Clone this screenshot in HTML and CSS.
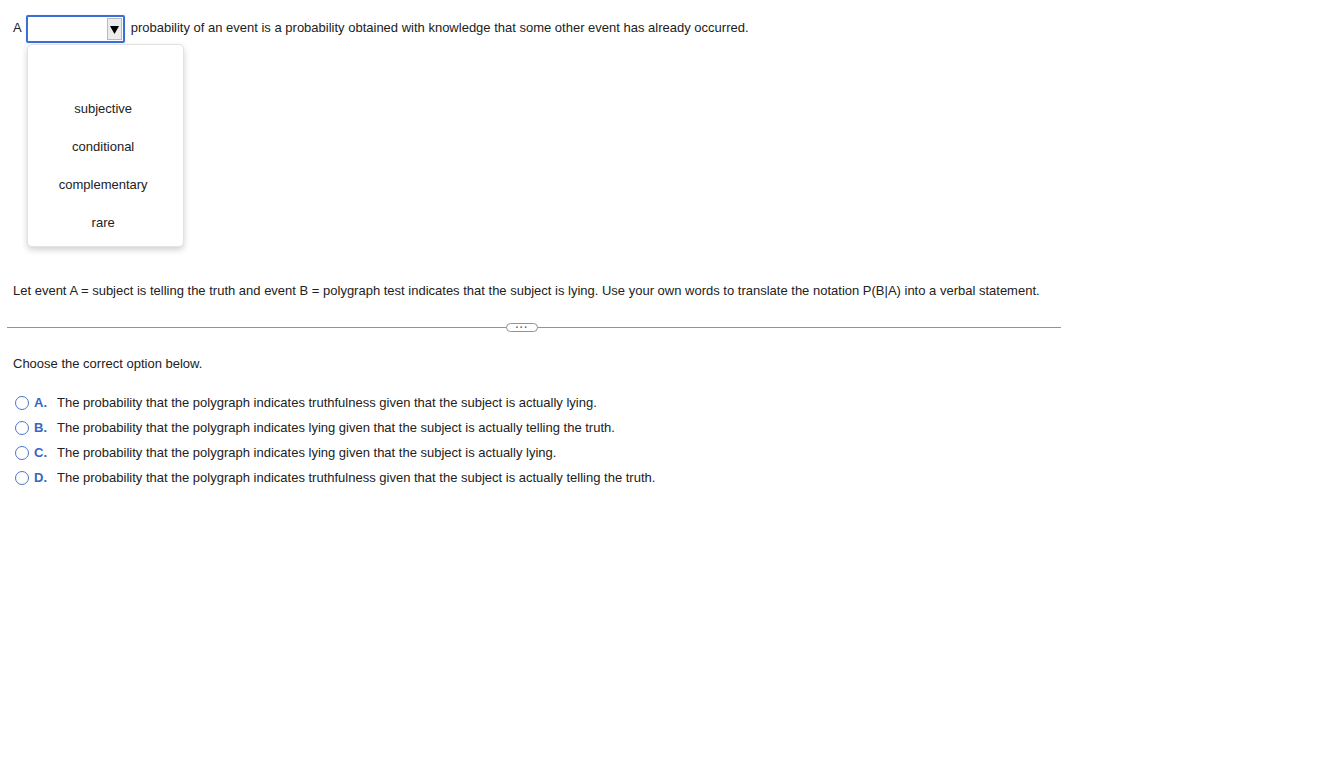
FILE: index.html
```html
<!DOCTYPE html>
<html>
<head>
<meta charset="utf-8">
<link rel="stylesheet" href="styles.css">
</head>
<body>
<div class="page">
  <div class="q1">
    <span class="lead">A</span>
    <span class="select-wrap">
      <span class="select"><span class="arrow"><svg width="9" height="9" viewBox="0 0 9 9"><path d="M0 1 H9 L4.5 9 Z" fill="#000"/></svg></span></span>
      <div class="menu">
        <div class="opt">subjective</div>
        <div class="opt">conditional</div>
        <div class="opt">complementary</div>
        <div class="opt">rare</div>
      </div>
    </span>
    <span class="rest">probability of an event is a probability obtained with knowledge that some other event has already occurred.</span>
  </div>

  <p class="q2">Let event A = subject is telling the truth and event B = polygraph test indicates that the subject is lying. Use your own words to translate the notation P(B|A) into a verbal statement.</p>

  <div class="divider"><span class="more">&middot;&middot;&middot;</span></div>

  <p class="choose">Choose the correct option below.</p>

  <ul class="choices">
    <li><span class="radio"></span><span class="letter">A.</span><span>The probability that the polygraph indicates truthfulness given that the subject is actually lying.</span></li>
    <li><span class="radio"></span><span class="letter">B.</span><span>The probability that the polygraph indicates lying given that the subject is actually telling the truth.</span></li>
    <li><span class="radio"></span><span class="letter">C.</span><span>The probability that the polygraph indicates lying given that the subject is actually lying.</span></li>
    <li><span class="radio"></span><span class="letter">D.</span><span>The probability that the polygraph indicates truthfulness given that the subject is actually telling the truth.</span></li>
  </ul>
</div>
</body>
</html>
```

FILE: styles.css
```css
html, body {
  margin: 0;
  padding: 0;
  background: #fff;
}
body {
  font-family: "Liberation Sans", Arial, sans-serif;
  font-size: 13px;
  color: #222;
}
.page {
  width: 1062px;
  padding: 15px 0 0 0;
}
.q1 {
  display: flex;
  align-items: flex-start;
  height: 28px;
  line-height: 26px;
  padding-left: 13px;
}
.lead {
  margin-right: 4px;
}
.select-wrap {
  position: relative;
  display: inline-block;
  line-height: 18px;
}
.select {
  display: flex;
  justify-content: flex-end;
  align-items: center;
  box-sizing: border-box;
  width: 99px;
  height: 28px;
  border: 2px solid #3a6fd8;
  border-radius: 2px;
  box-shadow: 0 0 1px #9db5ea;
  padding-right: 1px;
}
.arrow {
  display: flex;
  align-items: center;
  justify-content: center;
  box-sizing: border-box;
  width: 15px;
  height: 22px;
  background: #ececec;
  border: 1px solid #b9b9b9;
}
.menu {
  position: absolute;
  left: 1px;
  top: 29px;
  width: 157px;
  height: 203px;
  box-sizing: border-box;
  background: #fff;
  border: 1px solid #e2e2e2;
  border-radius: 5px;
  box-shadow: 0 3px 6px rgba(0,0,0,0.18);
  padding: 55px 4px 0 0;
  z-index: 2;
}
.opt {
  text-align: center;
  height: 38px;
  line-height: 18px;
  color: #222;
}
.rest {
  margin-left: 6px;
}
.q2 {
  margin: 0;
  padding: 239px 0 0 13px;
  line-height: 18px;
}
.divider {
  margin: 27px 0 0 7px;
  width: 1054px;
  height: 1px;
  background: #8e949c;
  display: flex;
  justify-content: center;
  align-items: center;
}
.more {
  display: inline-flex;
  align-items: center;
  justify-content: center;
  width: 30px;
  height: 7px;
  background: #fff;
  border: 1px solid #8e949c;
  border-radius: 5px;
  font-size: 10px;
  letter-spacing: 1px;
  line-height: 7px;
  color: #666;
  margin-right: 24px;
  font-weight: bold;
}
.choose {
  margin: 27px 0 0 13px;
  line-height: 18px;
}
.choices {
  list-style: none;
  margin: 17px 0 0 0;
  padding: 0 0 0 15px;
}
.choices li {
  display: flex;
  align-items: center;
  height: 25px;
}
.radio {
  display: inline-block;
  box-sizing: border-box;
  width: 14px;
  height: 14px;
  border: 1.5px solid #4a76c9;
  border-radius: 50%;
  margin-right: 5px;
}
.letter {
  color: #3866c4;
  font-weight: bold;
  width: 23px;
}
```
